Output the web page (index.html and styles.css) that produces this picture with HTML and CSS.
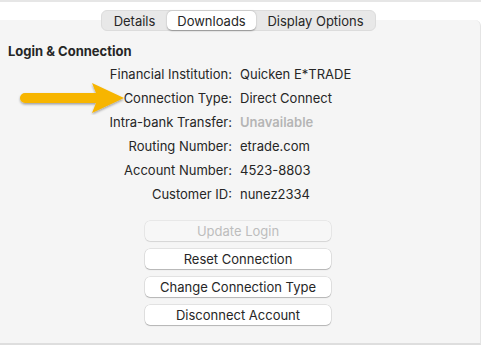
FILE: index.html
```html
<!DOCTYPE html>
<html lang="en">
<head>
  <meta charset="UTF-8" />
  <title>Account Settings</title>
  <link rel="stylesheet" href="styles.css">
</head>
<body>
  <div class="topline"></div>

  <div class="tabs">
    <button class="tab">Details</button>
    <button class="tab active">Downloads</button>
    <button class="tab">Display Options</button>
  </div>

  <div class="panel">
    <h3>Login &amp; Connection</h3>

    <div class="info">
      <div class="row"><span class="key">Financial Institution:</span><span class="val">Quicken E*TRADE</span></div>
      <div class="row">
        <span class="key">
          <svg class="arrow" width="112" height="34" viewBox="0 0 112 34">
            <defs>
              <filter id="shadow" x="-10%" y="-30%" width="120%" height="160%">
                <feDropShadow dx="0" dy="1.5" stdDeviation="1.2" flood-color="#000" flood-opacity="0.35"/>
              </filter>
            </defs>
            <path d="M9 12 L80 12 L76 2 L108 17 L76 32 L80 22 L9 22 A5 5 0 0 1 9 12 Z" fill="#f7b500" filter="url(#shadow)"/>
          </svg>
          Connection Type:
        </span><span class="val">Direct Connect</span></div>
      <div class="row"><span class="key">Intra-bank Transfer:</span><span class="val muted">Unavailable</span></div>
      <div class="row"><span class="key">Routing Number:</span><span class="val">etrade.com</span></div>
      <div class="row"><span class="key">Account Number:</span><span class="val">4523-8803</span></div>
      <div class="row"><span class="key">Customer ID:</span><span class="val">nunez2334</span></div>
    </div>

    <div class="actions">
      <button class="btn" disabled>Update Login</button>
      <button class="btn">Reset Connection</button>
      <button class="btn">Change Connection Type</button>
      <button class="btn">Disconnect Account</button>
    </div>
  </div>
</body>
</html>
```

FILE: styles.css
```css
body {
  margin: 0;
  width: 491px;
  height: 348px;
  background: #fff;
  font-family: Inter, "Noto Sans", sans-serif;
  font-size: 13px;
  color: #262626;
  overflow: hidden;
}

.topline {
  width: 481px;
  height: 2px;
  background: #e6e6e6;
}

.tabs {
  position: relative;
  z-index: 1;
  display: flex;
  width: 275px;
  height: 21px;
  margin: 8px 0 0 101px;
  background: #e8e8e8;
  border: 1px solid #dcdcdc;
  border-radius: 6px;
  box-sizing: border-box;
}

.tab {
  font: inherit;
  color: #262626;
  background: none;
  border: none;
  padding: 0;
  border-radius: 5px;
}

.tab:nth-child(1) { width: 65px; }
.tab:nth-child(2) { width: 89px; }
.tab:nth-child(3) { flex: 1; }

.tab.active {
  background: #fff;
  box-shadow: 0 0.5px 1.5px rgba(0, 0, 0, 0.35);
}

.panel {
  width: 481px;
  height: 325px;
  margin-top: -11px;
  padding: 23px 0 0 0;
  background: #f5f5f5;
  border-right: 1px solid #e4e4e4;
  border-bottom: 2px solid #dedede;
  border-top-right-radius: 6px;
  box-sizing: border-box;
}

h3 {
  margin: 0 0 3px 8px;
  font-size: 13px;
  font-weight: 700;
  line-height: 16px;
}

.info {
  display: flex;
  flex-direction: column;
}

.row {
  display: grid;
  grid-template-columns: 232px 1fr;
  column-gap: 8px;
  height: 24px;
  align-items: center;
}

.key {
  position: relative;
  text-align: right;
}

.arrow {
  position: absolute;
  left: 16px;
  top: -9px;
}

.muted {
  color: #b5b5b5;
  font-weight: 600;
}

.actions {
  display: flex;
  flex-direction: column;
  gap: 8px;
  margin: 15px 0 0 145px;
  width: 186px;
}

.btn {
  font: inherit;
  color: #262626;
  height: 20px;
  padding: 0;
  background: #fff;
  border: none;
  border-radius: 5px;
  box-shadow: 0 0 0 0.5px rgba(0, 0, 0, 0.15), 0 1px 1px rgba(0, 0, 0, 0.2);
}

.btn:disabled {
  color: #bdbdbd;
  background: #f7f7f7;
  box-shadow: 0 0 0 0.5px rgba(0, 0, 0, 0.1), 0 1px 1px rgba(0, 0, 0, 0.08);
}
```
